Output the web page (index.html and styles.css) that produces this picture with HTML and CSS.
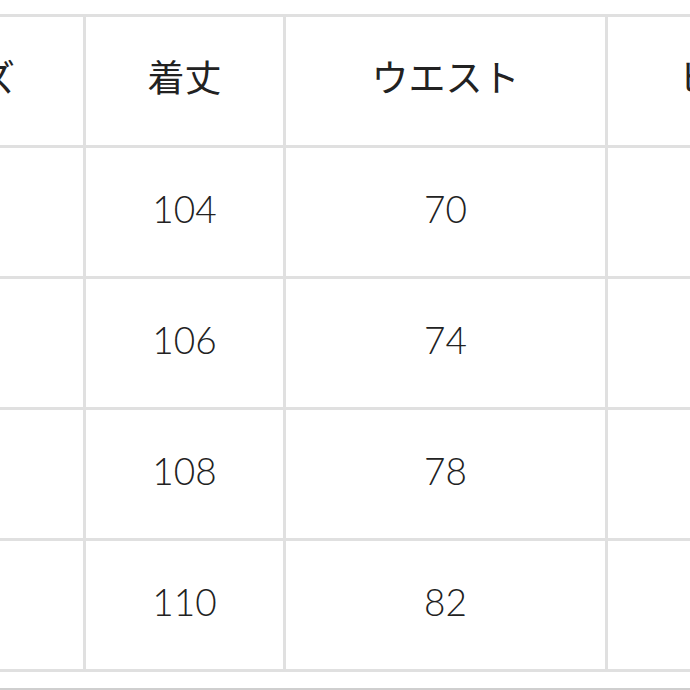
FILE: index.html
```html
<!DOCTYPE html>
<html lang="ja">
<head>
<meta charset="utf-8">
<link rel="stylesheet" href="styles.css">
</head>
<body>
<div class="page">
  <table class="size-table">
    <thead>
      <tr>
        <th class="c1">サイズ</th>
        <th class="c2">着丈</th>
        <th class="c3">ウエスト</th>
        <th class="c4">ヒップ</th>
      </tr>
    </thead>
    <tbody>
      <tr><td>S</td><td>104</td><td>70</td><td>92</td></tr>
      <tr><td>M</td><td>106</td><td>74</td><td>96</td></tr>
      <tr><td>L</td><td>108</td><td>78</td><td>100</td></tr>
      <tr><td>XL</td><td>110</td><td>82</td><td>104</td></tr>
    </tbody>
  </table>
  <div class="rule"></div>
</div>
</body>
</html>
```

FILE: styles.css
```css
html, body {
  margin: 0;
  padding: 0;
  background: #fff;
  overflow: hidden;
}
.page {
  width: 690px;
  height: 690px;
  overflow: hidden;
}
.size-table {
  margin-top: 14px;
  margin-left: -163px;
  border-collapse: separate;
  border-spacing: 0;
  table-layout: fixed;
  width: 1025px;
  border-top: 3px solid #e0e0e0;
  font-family: Lato, "Noto Sans CJK JP", "Noto Sans", sans-serif;
  font-size: 37px;
  color: #222;
}
.size-table th,
.size-table td {
  box-sizing: border-box;
  height: 131px;
  padding: 0 0 8px 0;
  text-align: center;
  vertical-align: middle;
  font-weight: 300;
  border-right: 3px solid #e0e0e0;
  border-bottom: 3px solid #e0e0e0;
}
.size-table th {
  padding-bottom: 10px;
  font-weight: 400;
}
.c1 { width: 249px; }
.c2 { width: 200px; }
.c3 { width: 322px; }
.c4 { width: 254px; }
.rule {
  margin-top: 16px;
  height: 2px;
  background: #cfcfcf;
}
```
